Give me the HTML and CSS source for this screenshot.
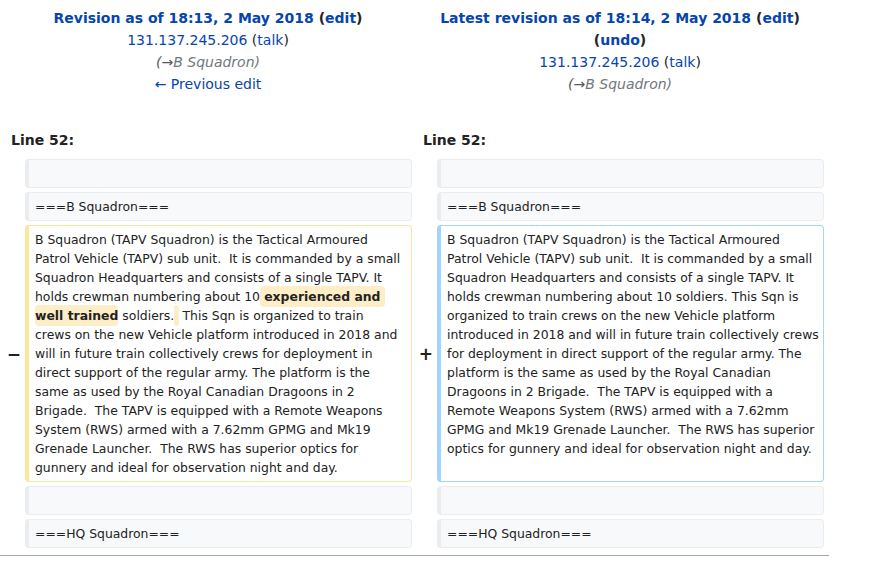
FILE: index.html
```html
<!DOCTYPE html>
<html>
<head>
<meta charset="utf-8">
<link rel="stylesheet" href="styles.css">
</head>
<body>
<table class="diff">
  <colgroup>
    <col class="col-marker"><col class="col-content"><col class="col-marker"><col class="col-content">
  </colgroup>
  <tr class="title-row">
    <td colspan="2" class="title">
      <div><strong><a href="#">Revision as of 18:13, 2 May 2018</a> <span class="paren">(<a href="#">edit</a>)</span></strong></div>
      <div><a href="#">131.137.245.206</a> <span class="paren">(<a href="#">talk</a>)</span></div>
      <div><span class="comment"><span class="dark">(→</span>B Squadron)</span></div>
      <div><a href="#">← Previous edit</a></div>
    </td>
    <td colspan="2" class="title">
      <div><strong><a href="#">Latest revision as of 18:14, 2 May 2018</a> <span class="paren">(<a href="#">edit</a>)</span> <span class="paren">(<a href="#">undo</a>)</span></strong></div>
      <div><a href="#">131.137.245.206</a> <span class="paren">(<a href="#">talk</a>)</span></div>
      <div><span class="comment"><span class="dark">(→</span>B Squadron)</span></div>
      <div>&nbsp;</div>
    </td>
  </tr>
  <tr>
    <td colspan="2" class="lineno">Line 52:</td>
    <td colspan="2" class="lineno">Line 52:</td>
  </tr>
  <tr>
    <td class="marker"></td>
    <td class="context"><br></td>
    <td class="marker"></td>
    <td class="context"><br></td>
  </tr>
  <tr>
    <td class="marker"></td>
    <td class="context">===B Squadron===</td>
    <td class="marker"></td>
    <td class="context">===B Squadron===</td>
  </tr>
  <tr>
    <td class="marker">−</td>
    <td class="deleted">B Squadron (TAPV Squadron) is the Tactical Armoured
Patrol Vehicle (TAPV) sub unit.  It is commanded by a small
Squadron Headquarters and consists of a single TAPV. It
holds crewman numbering about 10<del class="change"> experienced and </del>
<del class="change">well trained</del> soldiers.<del class="change"> </del> This Sqn is organized to train
crews on the new Vehicle platform introduced in 2018 and
will in future train collectively crews for deployment in
direct support of the regular army. The platform is the
same as used by the Royal Canadian Dragoons in 2
Brigade.  The TAPV is equipped with a Remote Weapons
System (RWS) armed with a 7.62mm GPMG and Mk19
Grenade Launcher.  The RWS has superior optics for
gunnery and ideal for observation night and day.</td>
    <td class="marker">+</td>
    <td class="added">B Squadron (TAPV Squadron) is the Tactical Armoured
Patrol Vehicle (TAPV) sub unit.  It is commanded by a small
Squadron Headquarters and consists of a single TAPV. It
holds crewman numbering about 10 soldiers. This Sqn is
organized to train crews on the new Vehicle platform
introduced in 2018 and will in future train collectively crews
for deployment in direct support of the regular army. The
platform is the same as used by the Royal Canadian
Dragoons in 2 Brigade.  The TAPV is equipped with a
Remote Weapons System (RWS) armed with a 7.62mm
GPMG and Mk19 Grenade Launcher.  The RWS has superior
optics for gunnery and ideal for observation night and day.</td>
  </tr>
  <tr>
    <td class="marker"></td>
    <td class="context"><br></td>
    <td class="marker"></td>
    <td class="context"><br></td>
  </tr>
  <tr>
    <td class="marker"></td>
    <td class="context">===HQ Squadron===</td>
    <td class="marker"></td>
    <td class="context">===HQ Squadron===</td>
  </tr>
</table>
<div class="rule"></div>
</body>
</html>
```

FILE: styles.css
```css
html, body {
  margin: 0;
  padding: 0;
  background: #fff;
}
body {
  font-family: "DejaVu Sans", sans-serif;
  font-size: 14px;
  color: #222;
}
a {
  color: #0645ad;
  text-decoration: none;
}
table.diff {
  width: 828px;
  table-layout: fixed;
  border-collapse: separate;
  border-spacing: 4px;
  margin: 0;
}
.col-marker { width: 17px; }
.col-content { width: 387px; }
td {
  padding: 0;
}
.title {
  text-align: center;
  vertical-align: top;
  line-height: 22px;
  font-size: 14px;
  padding-top: 3px;
}
.paren { color: #222; }
.comment {
  font-style: italic;
  color: #72777d;
}
.comment .dark { color: #54595d; }
.lineno {
  font-weight: bold;
  font-size: 14px;
  line-height: 22px;
  padding: 8px 0 4px 7px;
}
.marker {
  text-align: right;
  font-weight: bold;
  font-size: 17px;
  line-height: 20px;
  vertical-align: middle;
}
.context, .deleted, .added {
  font-size: 12.4px;
  line-height: 19px;
  vertical-align: top;
  white-space: pre;
  overflow: hidden;
  border-style: solid;
  border-width: 1px 1px 1px 4px;
  border-radius: 4px;
  padding: 4px 2px 4px 6px;
}
.context {
  background: #f8f9fa;
  border-color: #eaecf0;
  color: #222;
  padding-top: 4px;
  padding-bottom: 4px;
}
.deleted { border-color: #ffe49c; }
.added { border-color: #a3d3ff; }
.change {
  font-weight: bold;
  text-decoration: none;
  background: #feeec8;
  border-radius: 4px;
  padding: 3px 0;
}
.rule {
  width: 829px;
  border-top: 1px solid #a2a9b1;
  margin-top: 3px;
}
```
